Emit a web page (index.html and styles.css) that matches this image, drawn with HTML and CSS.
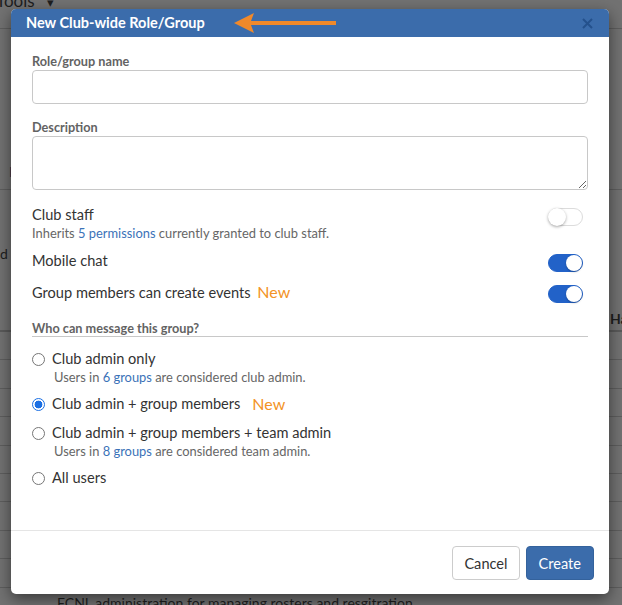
FILE: index.html
```html
<!DOCTYPE html>
<html lang="en">
<head>
    <meta charset="UTF-8">
    <meta name="viewport" content="width=device-width, initial-scale=1.0">
    <title>New Club-wide Role/Group</title>
    <link rel="stylesheet" href="styles.css">
</head>
<body>
    <div class="page">
        <div class="topbar">
            <span class="tools">Tools <span class="caret">&#9662;</span></span>
        </div>
        <div class="tabs">
            <span class="tab">Roles &amp; Groups</span>
        </div>
        <p class="intro">d to manage permissions for club staff.</p>
        <div class="table">
            <div class="thead"><span class="th">Handle</span></div>
            <div class="row"></div>
            <div class="row"></div>
            <div class="row"></div>
            <div class="row"></div>
            <div class="row"></div>
            <div class="row"></div>
            <div class="row"></div>
            <div class="row"></div>
            <div class="row"></div>
            <div class="row last"><span class="cell">FCNL administration for managing rosters and resgitration</span></div>
        </div>
    </div>

    <div class="modal">
        <div class="modal-header">
            <span class="modal-title">New Club-wide Role/Group</span>
            <svg class="arrow" width="102" height="20" viewBox="0 0 102 20">
                <polygon points="0,10 20,0 17,8 102,8 102,12 17,12 20,20" fill="#f0892a"/>
            </svg>
            <svg class="close" width="11" height="11" viewBox="0 0 11 11">
                <path d="M1 1 L10 10 M10 1 L1 10" stroke="#24518c" stroke-width="2"/>
            </svg>
        </div>

        <div class="modal-body">
            <div class="form-group">
                <label class="field-label">Role/group name</label>
                <input class="text-input" type="text">
            </div>
            <div class="form-group">
                <label class="field-label">Description</label>
                <textarea class="text-area"></textarea>
            </div>

            <div class="setting">
                <div class="setting-text">
                    <div class="setting-name">Club staff</div>
                    <div class="hint">Inherits <a href="#">5 permissions</a> currently granted to club staff.</div>
                </div>
                <span class="toggle"></span>
            </div>
            <div class="setting">
                <div class="setting-text">
                    <div class="setting-name">Mobile chat</div>
                </div>
                <span class="toggle on"></span>
            </div>
            <div class="setting">
                <div class="setting-text">
                    <div class="setting-name">Group members can create events <span class="new">New</span></div>
                </div>
                <span class="toggle on"></span>
            </div>

            <div class="section-title">Who can message this group?</div>
            <div class="radio-list">
                <div class="radio-item">
                    <div class="radio-line"><span class="radio"></span>Club admin only</div>
                    <div class="hint indent">Users in <a href="#">6 groups</a> are considered club admin.</div>
                </div>
                <div class="radio-item">
                    <div class="radio-line"><span class="radio checked"></span>Club admin + group members <span class="new">New</span></div>
                </div>
                <div class="radio-item">
                    <div class="radio-line"><span class="radio"></span>Club admin + group members + team admin</div>
                    <div class="hint indent">Users in <a href="#">8 groups</a> are considered team admin.</div>
                </div>
                <div class="radio-item">
                    <div class="radio-line"><span class="radio"></span>All users</div>
                </div>
            </div>
        </div>

        <div class="modal-footer">
            <button class="btn">Cancel</button>
            <button class="btn primary">Create</button>
        </div>
    </div>
</body>
</html>
```

FILE: styles.css
```css
* {
    box-sizing: border-box;
    margin: 0;
    padding: 0;
}

body {
    font-family: Lato, "Open Sans", sans-serif;
    background-color: #727272;
    color: #333;
    width: 622px;
    height: 605px;
    overflow: hidden;
    position: relative;
}

/* dimmed page behind the dialog */

.page {
    color: #1e1e1e;
}

.topbar {
    height: 29px;
    border-bottom: 1px solid #5e5e5e;
    overflow: hidden;
}

.tools {
    display: block;
    margin: -9px 0 0 -4px;
    font-size: 17px;
    line-height: 20px;
    white-space: nowrap;
}

.caret {
    font-size: 13px;
    margin-left: 8px;
}

.tabs {
    height: 161px;
    border-bottom: 1px solid #5e5e5e;
    padding: 132px 0 0 9px;
}

.tab {
    font-size: 14px;
    color: #1f2d48;
    white-space: nowrap;
}

.intro {
    margin-top: 54px;
    font-size: 14px;
    line-height: 20px;
    white-space: nowrap;
}

.table {
    margin-top: 40px;
}

.thead {
    height: 28px;
    border-bottom: 2px solid #5a5a5a;
    padding: 4px 0 0 610px;
    white-space: nowrap;
    overflow: hidden;
}

.th {
    font-size: 14px;
    font-weight: bold;
}

.row {
    height: 28.4px;
    border-bottom: 1px solid #5e5e5e;
}

.row.last {
    border-bottom: 0;
    padding: 4px 0 0 57px;
}

.cell {
    font-size: 14px;
    white-space: nowrap;
}

/* dialog */

.modal {
    position: absolute;
    left: 11px;
    top: 9px;
    width: 598px;
    background-color: #fff;
    border-radius: 5px;
    box-shadow: 0px 5px 15px rgba(0, 0, 0, 0.5);
    overflow: hidden;
}

.modal-header {
    position: relative;
    height: 28px;
    background-color: #3b6cab;
    display: flex;
    align-items: center;
    padding: 0 15px;
}

.modal-title {
    color: #fff;
    font-size: 14.5px;
    font-weight: bold;
    line-height: 16px;
}

.arrow {
    position: absolute;
    left: 223px;
    top: 4px;
}

.close {
    position: absolute;
    right: 16px;
    top: 9px;
}

.modal-body {
    padding: 16px 21px 33px;
}

.form-group {
    margin-bottom: 15px;
}

.field-label,
.section-title {
    display: block;
    font-size: 12.7px;
    font-weight: bold;
    line-height: 16px;
    color: #636363;
}

.field-label {
    margin-bottom: 1px;
}

.text-input,
.text-area {
    display: block;
    width: 100%;
    border: 1px solid #c8c8c8;
    border-radius: 4px;
    background-color: #fff;
    font-family: inherit;
    font-size: 14px;
    resize: vertical;
}

.text-input {
    height: 34px;
}

.text-area {
    height: 54px;
}

.setting {
    display: flex;
    justify-content: space-between;
    align-items: flex-start;
    margin-bottom: 10px;
}

.setting-name,
.radio-line {
    font-size: 14.6px;
    line-height: 20px;
    color: #333;
}

.hint {
    font-size: 12.9px;
    line-height: 16px;
    color: #666;
}

.hint a {
    color: #3b72b8;
    text-decoration: none;
}

.hint.indent {
    padding-left: 22px;
}

.new {
    color: #f39325;
    font-size: 16px;
    margin-left: 3px;
}

.toggle {
    position: relative;
    width: 35px;
    height: 18px;
    margin: 3px 5px 0 0;
    border: 1px solid #dcdcdc;
    border-radius: 9px;
    background-color: #fff;
}

.toggle::after {
    content: "";
    position: absolute;
    left: -1px;
    top: -1px;
    width: 18px;
    height: 18px;
    border-radius: 50%;
    background-color: #fff;
    box-shadow: 0px 1px 3px rgba(0, 0, 0, 0.35);
}

.toggle.on {
    background-color: #2262c8;
    border-color: #2262c8;
}

.toggle.on::after {
    left: auto;
    right: 0;
    top: 0;
    width: 16px;
    height: 16px;
    box-shadow: 0px 1px 2px rgba(0, 0, 0, 0.25);
}

.section-title {
    margin-top: 17px;
    border-bottom: 1px solid #c8c8c8;
}

.radio-list {
    padding-top: 12px;
}

.radio-item {
    margin-bottom: 9px;
}

.radio-line {
    display: flex;
    align-items: center;
}

.radio-line .new {
    margin-left: 12px;
}

.radio {
    width: 13px;
    height: 13px;
    margin: 0 7px 0 0;
    border: 1px solid #767676;
    border-radius: 50%;
    background-color: #fff;
    flex-shrink: 0;
}

.radio.checked {
    border-color: #1b6fe3;
    background: radial-gradient(circle, #1b6fe3 0 3.6px, #fff 4.2px);
}

.modal-footer {
    display: flex;
    justify-content: flex-end;
    gap: 6px;
    border-top: 1px solid #e5e5e5;
    padding: 15px 15px 14px;
}

.btn {
    height: 34px;
    padding: 0 11px;
    border: 1px solid #ccc;
    border-radius: 4px;
    background-color: #fff;
    color: #333;
    font-family: inherit;
    font-size: 14.6px;
}

.btn.primary {
    padding: 0 12px;
    background-color: #3b6cab;
    border-color: #34629c;
    color: #fff;
}
```
